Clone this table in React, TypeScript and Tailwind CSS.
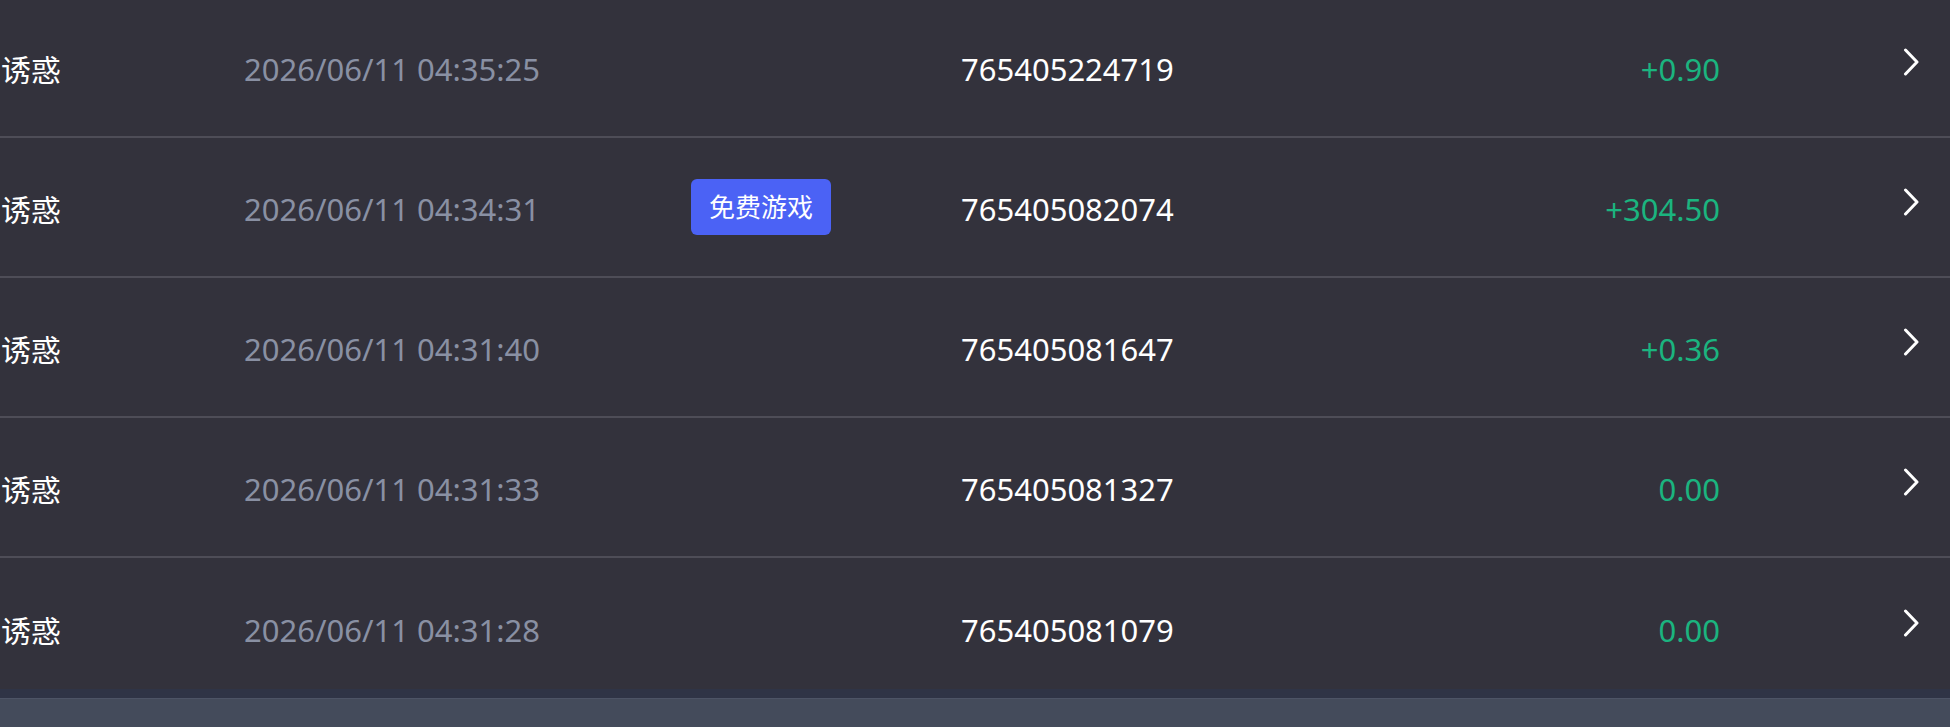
const rows = [
  { time: "2026/06/11 04:35:25", free: false, id: "765405224719", amount: "+0.90" },
  { time: "2026/06/11 04:34:31", free: true, id: "765405082074", amount: "+304.50" },
  { time: "2026/06/11 04:31:40", free: false, id: "765405081647", amount: "+0.36" },
  { time: "2026/06/11 04:31:33", free: false, id: "765405081327", amount: "0.00" },
  { time: "2026/06/11 04:31:28", free: false, id: "765405081079", amount: "0.00" },
];

function Chevron() {
  return (
    <svg width="16" height="28" viewBox="0 0 16 28" fill="none" className="-mt-[10px]">
      <polyline
        points="2.5,2 14,14 2.5,26"
        stroke="#ffffff"
        strokeWidth="3"
        strokeLinecap="round"
        strokeLinejoin="round"
      />
    </svg>
  );
}

export default function App() {
  return (
    <div className="w-[1950px] h-[727px] overflow-hidden bg-[#33323c] font-['Noto_Sans','Noto_Sans_CJK_SC',sans-serif] flex flex-col">
      {/* record list */}
      <div className="-mt-[2px] flex flex-col">
        {rows.map((r, i) => (
          <div
            key={r.id}
            className={`grid grid-cols-[244px_447px_270px_439px_320px_1fr] items-center h-[140px] ${
              i < rows.length - 1 ? "border-b-2 border-[#4e4d57]" : ""
            }`}
          >
            <span className="pl-[1px] pt-[5px] text-[30px] text-white leading-none">诱惑</span>
            <span className="pt-[5px] text-[31px] text-[#8990a3] leading-none">{r.time}</span>
            <div>
              {r.free && (
                <span className="inline-flex items-center h-[56px] px-[18px] rounded-[6px] bg-[#4b62f5] text-[26px] text-white leading-none">
                  免费游戏
                </span>
              )}
            </div>
            <span className="pt-[5px] text-[31px] text-white leading-none">{r.id}</span>
            <span className="pt-[5px] text-right text-[31px] text-[#1bb47f] leading-none">{r.amount}</span>
            <div className="flex justify-end pr-[31px]">
              <Chevron />
            </div>
          </div>
        ))}
      </div>
      {/* bottom bar */}
      <div className="relative h-[33px] bg-[#444b5b] border-t border-[#4d5466] shadow-[0_-9px_0_0_#2f3446]" />
    </div>
  );
}
